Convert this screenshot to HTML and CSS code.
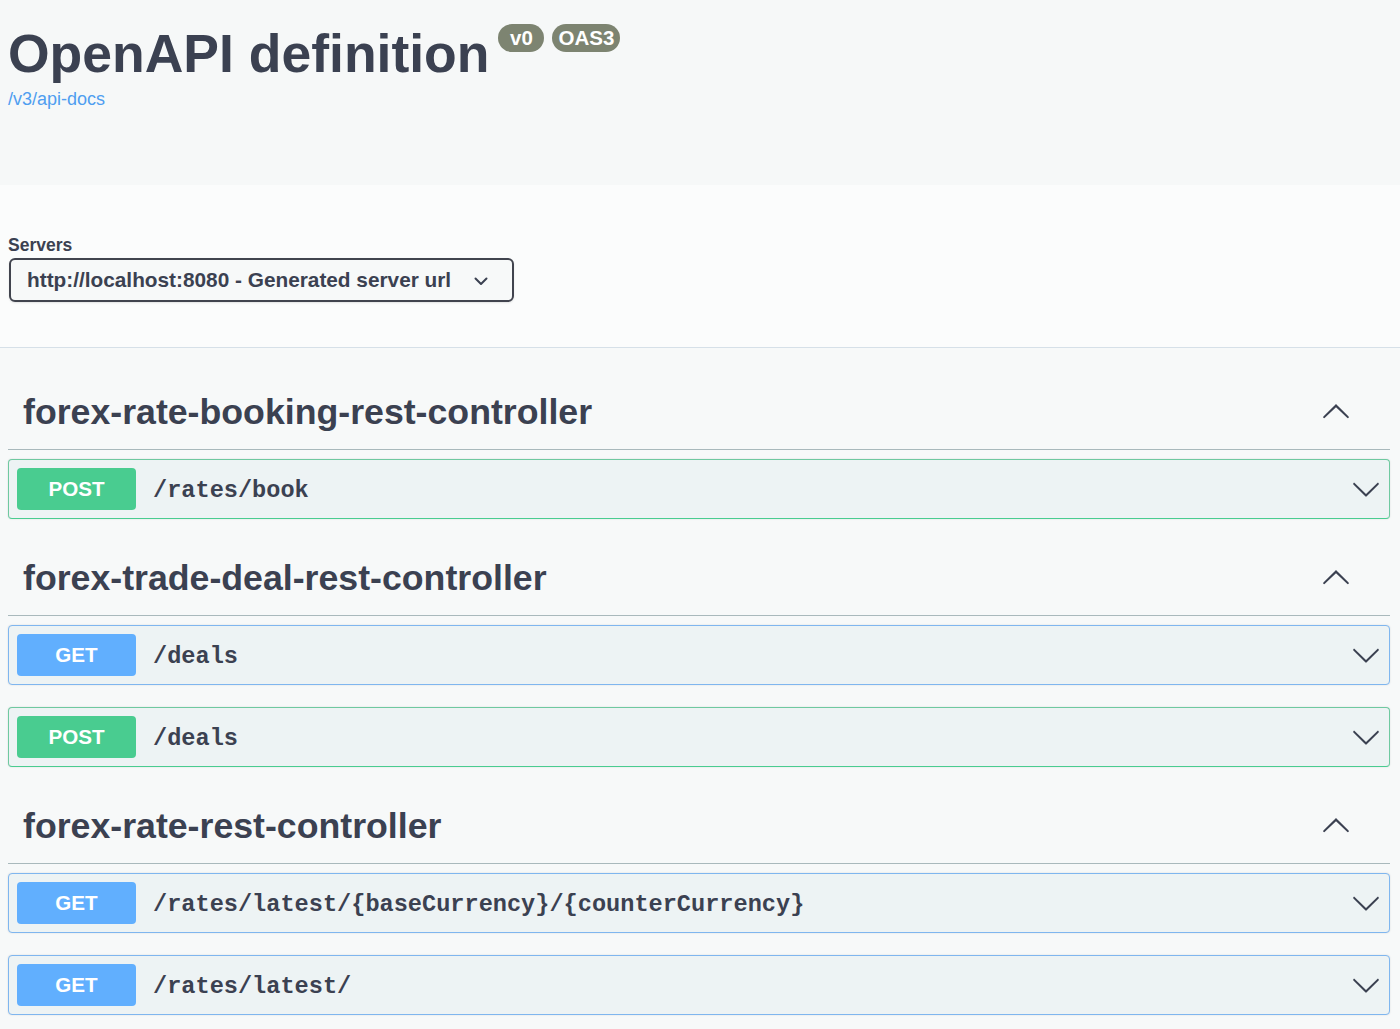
FILE: index.html
```html
<!DOCTYPE html>
<html lang="en">
<head>
<meta charset="utf-8">
<title>Swagger UI</title>
<link rel="stylesheet" href="styles.css">
</head>
<body>
<header class="info">
  <div class="title-row">
    <h1 class="title">OpenAPI definition</h1>
    <span class="stamp stamp-version">v0</span>
    <span class="stamp stamp-oas">OAS3</span>
  </div>
  <a class="docs-link" href="#">/v3/api-docs</a>
</header>

<section class="servers">
  <div class="servers-label">Servers</div>
  <div class="select">
    <span>http://localhost:8080 - Generated server url</span>
    <svg class="select-arrow" width="14" height="9" viewBox="0 0 14 9"><polyline points="1.5,1.5 7,7 12.5,1.5" fill="none" stroke="#3b4151" stroke-width="2" stroke-linecap="round" stroke-linejoin="round"/></svg>
  </div>
</section>

<main class="tags">
  <section class="tag">
    <div class="tag-head">
      <h3>forex-rate-booking-rest-controller</h3>
      <svg class="arrow-up" width="30" height="30" viewBox="0 0 20 20"><path d="M17.418 6.109c.272-.268.709-.268.979 0s.271.701 0 .969l-7.908 7.83c-.27.268-.707.268-.979 0l-7.908-7.83c-.27-.268-.27-.701 0-.969.271-.268.709-.268.979 0L10 13.25l7.418-7.141z" transform="rotate(180 10 10)"/></svg>
    </div>
    <div class="op op-post">
      <span class="method">POST</span>
      <span class="path">/rates/book</span>
      <svg class="arrow-down" width="30" height="30" viewBox="0 0 20 20"><path d="M17.418 6.109c.272-.268.709-.268.979 0s.271.701 0 .969l-7.908 7.83c-.27.268-.707.268-.979 0l-7.908-7.83c-.27-.268-.27-.701 0-.969.271-.268.709-.268.979 0L10 13.25l7.418-7.141z"/></svg>
    </div>
  </section>

  <section class="tag">
    <div class="tag-head">
      <h3>forex-trade-deal-rest-controller</h3>
      <svg class="arrow-up" width="30" height="30" viewBox="0 0 20 20"><path d="M17.418 6.109c.272-.268.709-.268.979 0s.271.701 0 .969l-7.908 7.83c-.27.268-.707.268-.979 0l-7.908-7.83c-.27-.268-.27-.701 0-.969.271-.268.709-.268.979 0L10 13.25l7.418-7.141z" transform="rotate(180 10 10)"/></svg>
    </div>
    <div class="op op-get">
      <span class="method">GET</span>
      <span class="path">/deals</span>
      <svg class="arrow-down" width="30" height="30" viewBox="0 0 20 20"><path d="M17.418 6.109c.272-.268.709-.268.979 0s.271.701 0 .969l-7.908 7.83c-.27.268-.707.268-.979 0l-7.908-7.83c-.27-.268-.27-.701 0-.969.271-.268.709-.268.979 0L10 13.25l7.418-7.141z"/></svg>
    </div>
    <div class="op op-post">
      <span class="method">POST</span>
      <span class="path">/deals</span>
      <svg class="arrow-down" width="30" height="30" viewBox="0 0 20 20"><path d="M17.418 6.109c.272-.268.709-.268.979 0s.271.701 0 .969l-7.908 7.83c-.27.268-.707.268-.979 0l-7.908-7.83c-.27-.268-.27-.701 0-.969.271-.268.709-.268.979 0L10 13.25l7.418-7.141z"/></svg>
    </div>
  </section>

  <section class="tag">
    <div class="tag-head">
      <h3>forex-rate-rest-controller</h3>
      <svg class="arrow-up" width="30" height="30" viewBox="0 0 20 20"><path d="M17.418 6.109c.272-.268.709-.268.979 0s.271.701 0 .969l-7.908 7.83c-.27.268-.707.268-.979 0l-7.908-7.83c-.27-.268-.27-.701 0-.969.271-.268.709-.268.979 0L10 13.25l7.418-7.141z" transform="rotate(180 10 10)"/></svg>
    </div>
    <div class="op op-get">
      <span class="method">GET</span>
      <span class="path">/rates/latest/{baseCurrency}/{counterCurrency}</span>
      <svg class="arrow-down" width="30" height="30" viewBox="0 0 20 20"><path d="M17.418 6.109c.272-.268.709-.268.979 0s.271.701 0 .969l-7.908 7.83c-.27.268-.707.268-.979 0l-7.908-7.83c-.27-.268-.27-.701 0-.969.271-.268.709-.268.979 0L10 13.25l7.418-7.141z"/></svg>
    </div>
    <div class="op op-get">
      <span class="method">GET</span>
      <span class="path">/rates/latest/</span>
      <svg class="arrow-down" width="30" height="30" viewBox="0 0 20 20"><path d="M17.418 6.109c.272-.268.709-.268.979 0s.271.701 0 .969l-7.908 7.83c-.27.268-.707.268-.979 0l-7.908-7.83c-.27-.268-.27-.701 0-.969.271-.268.709-.268.979 0L10 13.25l7.418-7.141z"/></svg>
    </div>
  </section>
</main>
</body>
</html>
```

FILE: styles.css
```css
* { box-sizing: border-box; }

html, body {
  margin: 0;
  padding: 0;
}

body {
  background: #f7f9f9;
  color: #3b4151;
  font-family: "Liberation Sans", Arial, Helvetica, sans-serif;
}

/* ---------- header ---------- */
.info {
  height: 185px;
  padding: 24px 0 0 8px;
  background: #f6f8f8;
}

.title-row {
  display: flex;
  align-items: flex-start;
}

.title {
  margin: 3px 0 0 0;
  font-size: 53.5px;
  line-height: 53px;
  font-weight: 700;
  color: #3b4151;
}

.stamp {
  display: inline-flex;
  align-items: center;
  justify-content: center;
  height: 28px;
  border-radius: 57px;
  background: #7d8471;
  color: #fff;
  font-weight: 700;
  font-size: 20.5px;
}

.stamp-version {
  margin-left: 9px;
  width: 46px;
}

.stamp-oas {
  margin-left: 8px;
  width: 68px;
}

.docs-link {
  display: block;
  margin-top: 9px;
  font-size: 18px;
  line-height: 20px;
  color: #4f9ef0;
  text-decoration: none;
}

/* ---------- servers ---------- */
.servers {
  height: 163px;
  padding: 50px 0 0 8px;
  background: #fbfcfc;
  border-bottom: 1px solid #d6e0e8;
}

.servers-label {
  font-size: 17.5px;
  line-height: 20px;
  font-weight: 700;
  color: #3b4151;
}

.select {
  display: flex;
  align-items: center;
  width: 505px;
  height: 44px;
  margin: 3px 0 0 1px;
  padding: 0 0 0 16px;
  border: 2px solid #41444e;
  border-radius: 6px;
  background: #f7f9f9;
  box-shadow: 0 1px 2px rgba(0, 0, 0, 0.1);
  font-size: 20.8px;
  font-weight: 700;
  color: #3b4151;
}

.select-arrow {
  margin-left: 23px;
  margin-top: 2px;
}

/* ---------- tags ---------- */
.tags {
  padding: 27px 10px 0 8px;
}

.tag-head {
  display: flex;
  align-items: center;
  justify-content: space-between;
  height: 75px;
  padding: 0 39px 0 15px;
  border-bottom: 1px solid #a9b9bc;
}

.tag-head h3 {
  margin: 0;
  font-size: 35.7px;
  font-weight: 700;
  color: #3b4151;
}

.arrow-up,
.arrow-down {
  fill: #3b4151;
  flex: none;
}

.op {
  display: flex;
  align-items: center;
  height: 60px;
  margin: 9px 0 22px 0;
  padding: 0 8px;
  border: 1px solid;
  border-radius: 4px;
  background: #edf3f4;
  box-shadow: 0 0 2px rgba(0, 0, 0, 0.12);
}

.op + .op {
  margin-top: 0;
}

.op-post {
  border-color: #6fc9a0;
  border-bottom-color: #49cc90;
}

.op-get {
  border-color: #7fb6ef;
}

.method {
  display: flex;
  align-items: center;
  justify-content: center;
  flex: none;
  width: 119px;
  height: 42px;
  border-radius: 4px;
  color: #fff;
  font-size: 20.6px;
  font-weight: 700;
}

.op-post .method { background: #49cc90; }
.op-get .method { background: #61affe; }

.path {
  flex: 1;
  margin-left: 17px;
  padding-top: 3px;
  font-family: "Liberation Mono", "Courier New", monospace;
  font-size: 23.6px;
  font-weight: 700;
  color: #3b4151;
}
```
